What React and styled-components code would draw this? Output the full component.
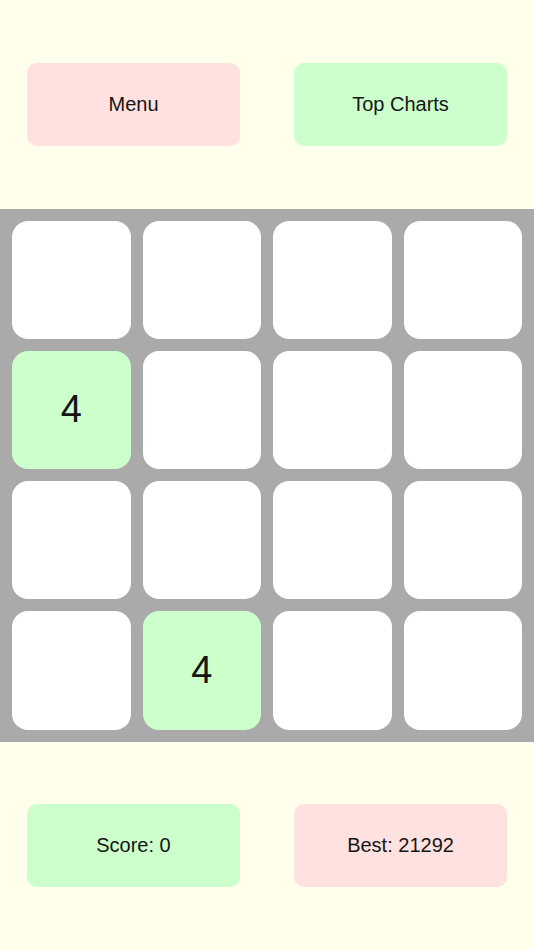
import styled, { createGlobalStyle } from 'styled-components';

const GlobalStyle = createGlobalStyle`
  html, body {
    margin: 0;
    padding: 0;
    background: #ffffeb;
    font-family: "Liberation Sans", Arial, sans-serif;
  }
`;

const board = [
  [0, 0, 0, 0],
  [4, 0, 0, 0],
  [0, 0, 0, 0],
  [0, 4, 0, 0],
];

const App = () => {
  return (
    <>
      <GlobalStyle />
      <Screen>
        <ButtonBar>
          <Pill $tone="pink">Menu</Pill>
          <Pill $tone="green">Top Charts</Pill>
        </ButtonBar>
        <Board>
          {board.flat().map((value, i) => (
            <Tile key={i} $filled={value > 0}>
              {value > 0 ? value : ''}
            </Tile>
          ))}
        </Board>
        <ButtonBar>
          <Pill $tone="green">Score: 0</Pill>
          <Pill $tone="pink">Best: 21292</Pill>
        </ButtonBar>
      </Screen>
    </>
  );
};

export default App;

const Screen = styled.div`
  display: flex;
  flex-direction: column;
  width: 534px;
  height: 950px;
  background: #ffffeb;
`;

const ButtonBar = styled.div`
  flex: 1;
  display: flex;
  align-items: center;
  justify-content: space-around;
`;

const Pill = styled.div`
  width: 213px;
  height: 83px;
  border-radius: 10px;
  display: flex;
  align-items: center;
  justify-content: center;
  font-size: 20px;
  color: #151515;
  background: ${(p) => (p.$tone === 'pink' ? '#ffe1df' : '#ccffcc')};
`;

const Board = styled.div`
  display: grid;
  grid-template-columns: repeat(4, 1fr);
  grid-template-rows: repeat(4, 1fr);
  gap: 12px;
  padding: 12px;
  height: 533px;
  box-sizing: border-box;
  background: #aaaaaa;
`;

const Tile = styled.div`
  border-radius: 16px;
  display: flex;
  align-items: center;
  justify-content: center;
  font-size: 38px;
  color: #151515;
  background: ${(p) => (p.$filled ? '#ccffcc' : '#ffffff')};
`;
